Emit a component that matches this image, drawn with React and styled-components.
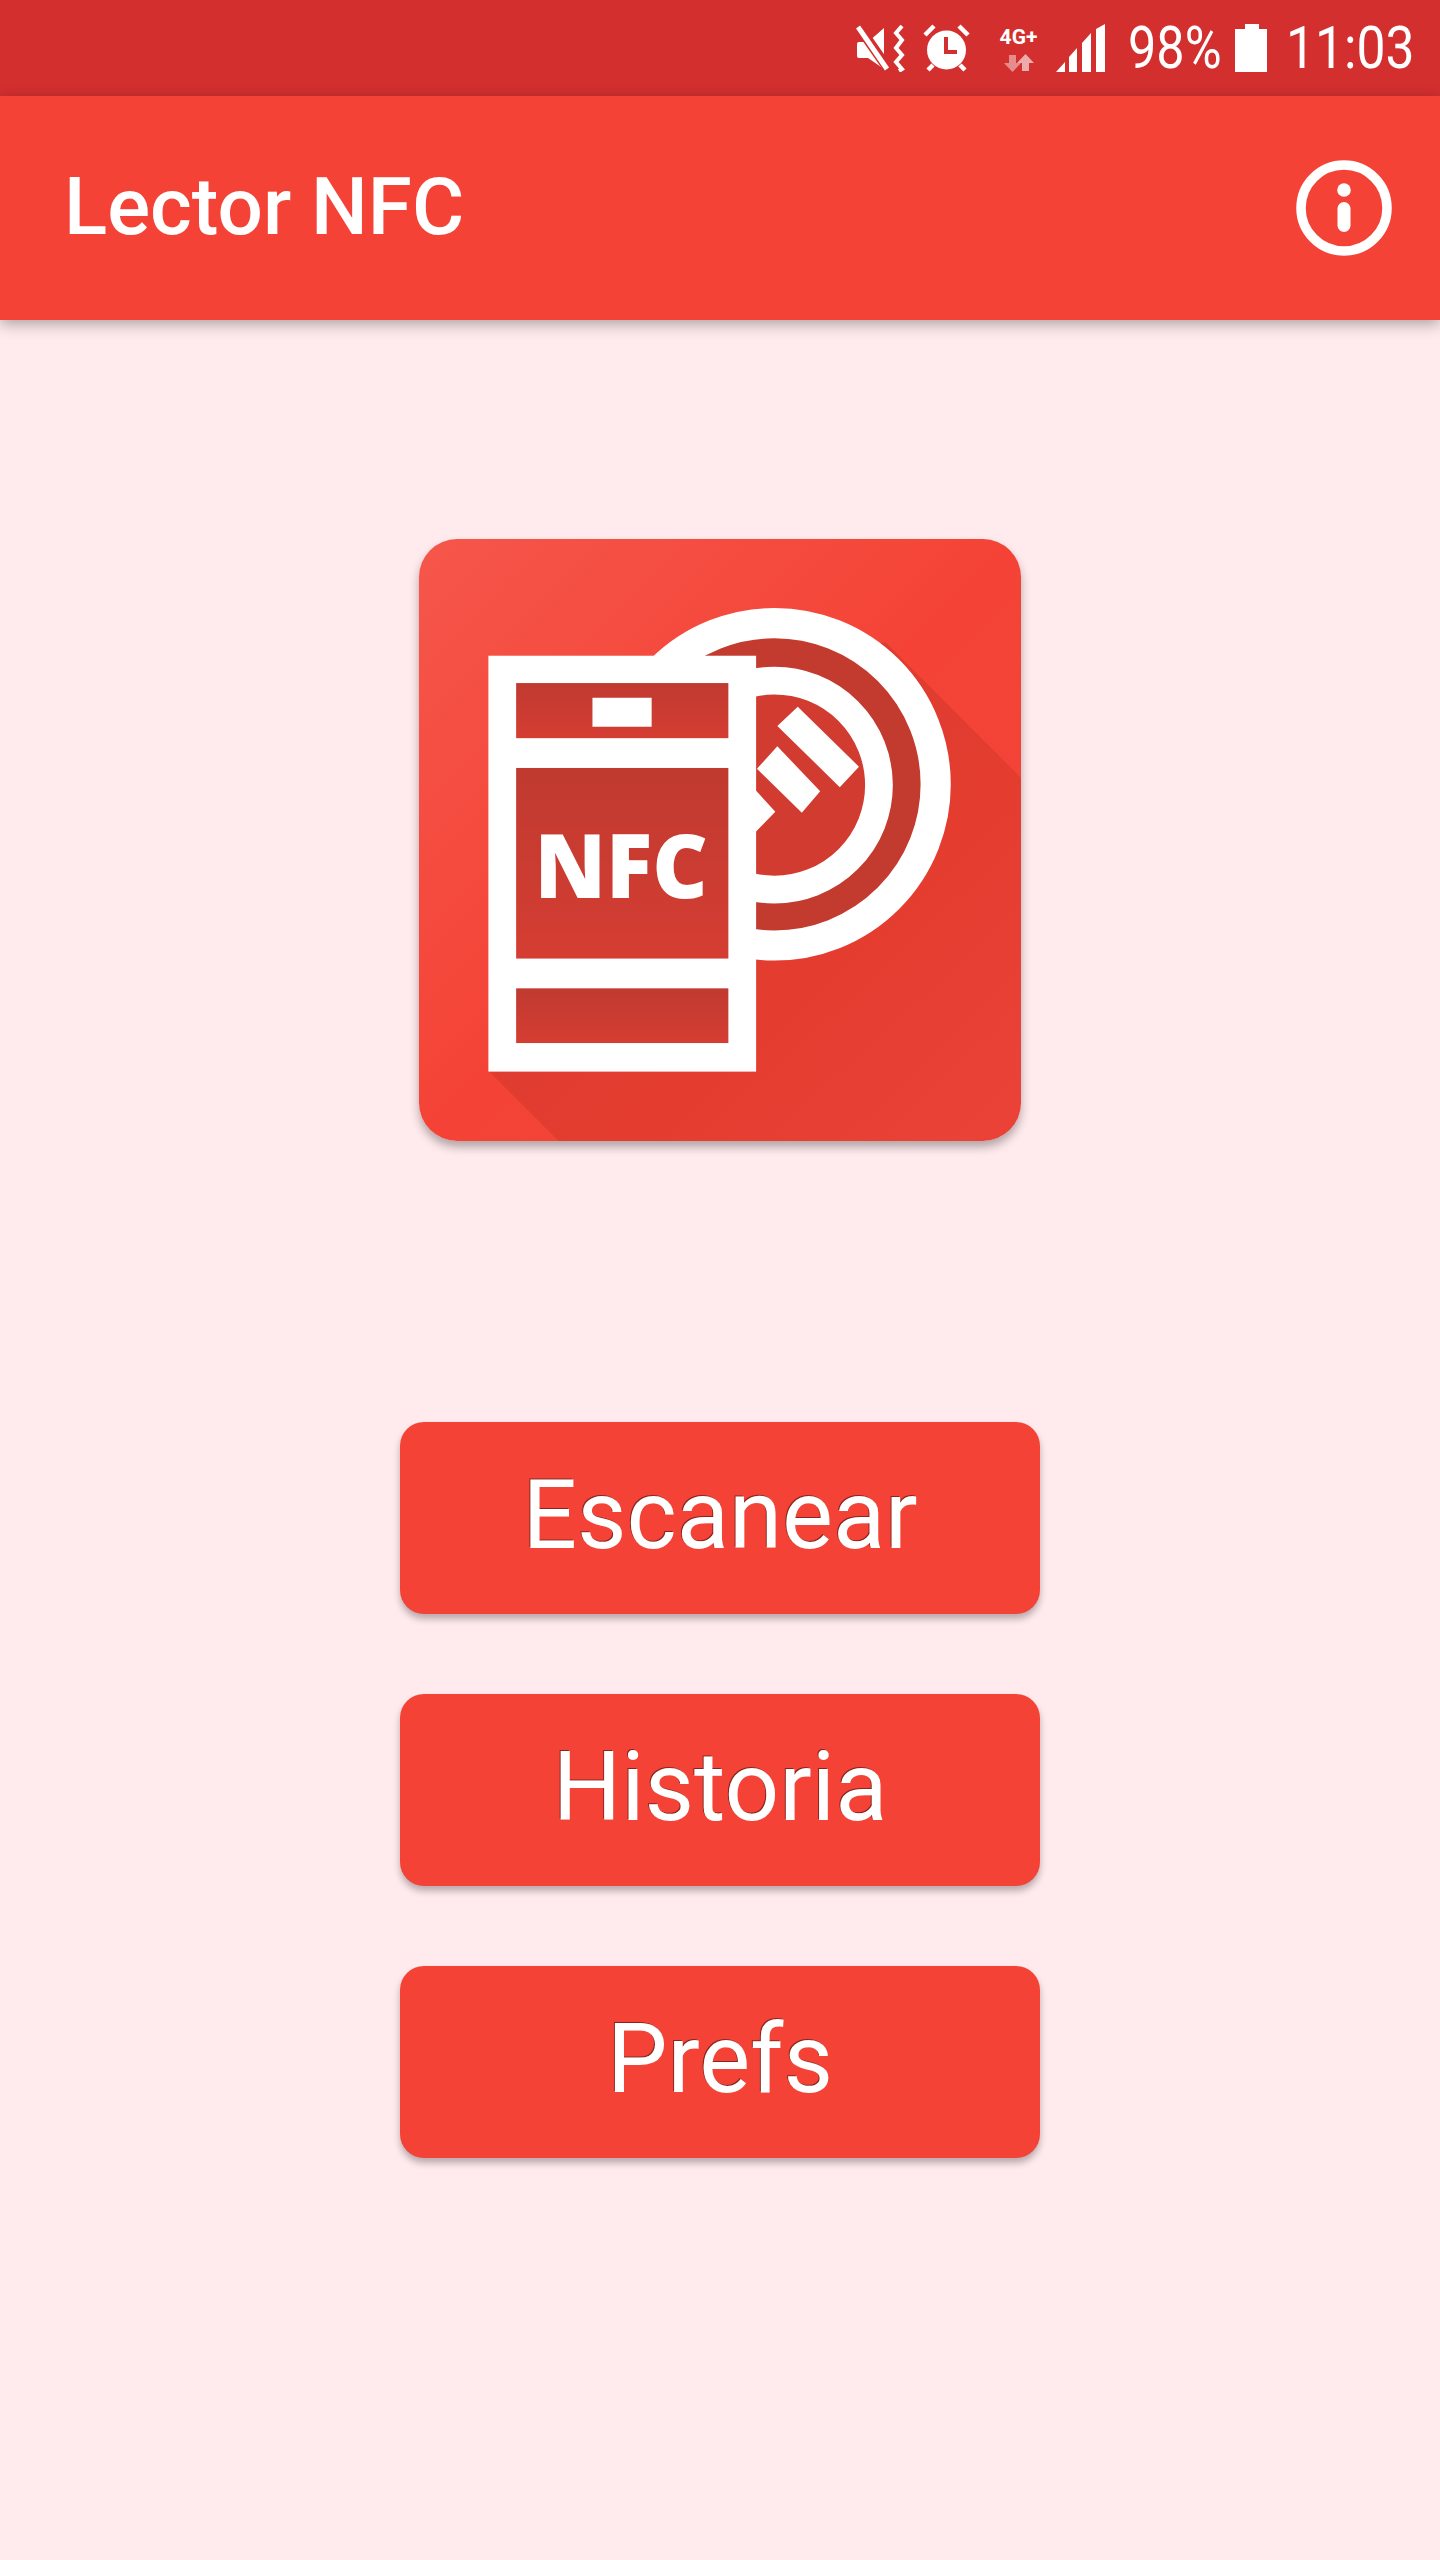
import React from 'react';
import styled, { createGlobalStyle } from 'styled-components';

const Global = createGlobalStyle`
  html, body { margin: 0; padding: 0; background: #FFEBEE; }
  #root { width: 1440px; }
`;

const Page = styled.div`
  width: 1440px;
  height: 2560px;
  background: #FFEBEE;
  display: flex;
  flex-direction: column;
  overflow: hidden;
  font-family: Roboto, "Liberation Sans", sans-serif;
`;

const StatusBar = styled.div`
  height: 96px;
  flex: none;
  background: #D32F2F;
  display: flex;
  align-items: center;
  justify-content: flex-end;
  padding-right: 27px;
  color: #fff;
`;

const StatusItem = styled.div`
  margin-left: ${p => p.$gap}px;
  display: flex;
  flex: none;
`;

const CondensedText = styled.span`
  display: block;
  width: ${p => p.$width}px;
  font-size: 60px;
  line-height: 60px;
  white-space: nowrap;
  transform: scaleX(${p => p.$scale});
  transform-origin: left center;
`;

const NetBlock = styled.div`
  width: 49px;
  height: 48px;
  display: flex;
  flex-direction: column;
  align-items: center;
  justify-content: space-between;
`;

const NetLabel = styled.span`
  font-size: 21px;
  line-height: 20px;
  font-weight: 700;
  white-space: nowrap;
  margin-top: 3px;
`;

const AppBar = styled.header`
  height: 224px;
  flex: none;
  background: #F44336;
  display: flex;
  align-items: center;
  justify-content: space-between;
  padding: 0 48px 0 64px;
  box-shadow: 0 4px 14px rgba(0, 0, 0, 0.32);
  position: relative;
  z-index: 1;
`;

const Title = styled.h1`
  margin: 0;
  color: #fff;
  font-size: 80px;
  line-height: 94px;
  font-weight: 500;
  transform: translateY(-1px);
`;

const Main = styled.main`
  display: flex;
  flex-direction: column;
  align-items: center;
  padding-top: 219px;
`;

const LogoFrame = styled.div`
  width: 602px;
  height: 602px;
  border-radius: 38px;
  overflow: hidden;
  box-shadow: 0 6px 10px rgba(0, 0, 0, 0.3);
  svg { display: block; filter: blur(0.6px); }
`;

const ButtonStack = styled.nav`
  margin-top: 281px;
  display: flex;
  flex-direction: column;
  gap: 80px;
`;

const MenuButton = styled.button`
  width: 640px;
  height: 192px;
  border: 0;
  border-radius: 24px;
  background: #F44336;
  color: #fff;
  font-family: Roboto, "Liberation Sans", sans-serif;
  font-size: 96px;
  font-weight: 400;
  line-height: 112px;
  padding: 0 0 6px;
  box-shadow: 0 5px 7px rgba(0, 0, 0, 0.28);
  text-shadow: -1px -1px 0 rgba(0, 0, 0, 0.45);
`;

const MuteIcon = () => (
  <svg width="52" height="47" viewBox="0 0 52 47">
    <path d="M3 17h9L28 3v41L12 33H3a2 2 0 0 1-2-2V19a2 2 0 0 1 2-2z" fill="#fff" />
    <path d="M3 2l30 43" stroke="#D32F2F" strokeWidth="10" />
    <path d="M2 2l29 42" stroke="#fff" strokeWidth="5" />
    <path d="M46 1l-6 7 6 7-6 8 6 7-6 7 6 7-3 2" stroke="#fff" strokeWidth="4" fill="none" />
  </svg>
);

const AlarmIcon = () => (
  <svg width="47" height="48" viewBox="0 0 47 48">
    <circle cx="23.5" cy="26" r="19.5" fill="#fff" />
    <path d="M2 11l9-9M45 11l-9-9M5 46l5-5M42 46l-5-5" stroke="#fff" strokeWidth="4.5" />
    <path d="M23 13v15h11" stroke="#D32F2F" strokeWidth="4" fill="none" />
  </svg>
);

const NetArrows = () => (
  <svg width="30" height="18" viewBox="0 0 30 18">
    <path d="M5 1h7v8h5l-8.500 9L0 9h5z" fill="#fff" fillOpacity="0.45" />
    <path d="M18 17h7V9h5l-8.500-9L13 9h5z" fill="#fff" fillOpacity="0.6" transform="translate(0 0)" />
  </svg>
);

const SignalIcon = () => (
  <svg width="49" height="48" viewBox="0 0 49 48">
    <path d="M0 48L9 38v10zM13 48V33l8-9v24zM26 48V19l9-10v39zM40 48V5l9-5v48z" fill="#fff" />
  </svg>
);

const BatteryIcon = () => (
  <svg width="32" height="48" viewBox="0 0 32 48">
    <path d="M10 0h14v5h8v43H0V5h10z" fill="#fff" />
  </svg>
);

const InfoIcon = () => (
  <svg width="96" height="96" viewBox="0 0 96 96">
    <circle cx="48" cy="48" r="43" fill="none" stroke="#fff" strokeWidth="9.500" />
    <circle cx="48" cy="30" r="6.800" fill="#fff" />
    <rect x="41.500" y="42" width="13" height="30" rx="6.500" fill="#fff" />
  </svg>
);

const NfcLogo = () => (
  <svg width="602" height="602" viewBox="47 47 1475 1475">
    <defs>
      <linearGradient id="base" x1="0" y1="0" x2="1" y2="1">
        <stop offset="0" stopColor="#F6564B" />
        <stop offset="0.5" stopColor="#F44336" />
        <stop offset="1" stopColor="#F2443A" />
      </linearGradient>
      <linearGradient id="cast" x1="0.15" y1="0.15" x2="0.95" y2="0.95">
        <stop offset="0" stopColor="#D93A2E" />
        <stop offset="0.6" stopColor="#E43D30" />
        <stop offset="1" stopColor="#EA4236" />
      </linearGradient>
      <linearGradient id="panel" x1="0" y1="0" x2="0" y2="1">
        <stop offset="0" stopColor="#C03A30" />
        <stop offset="1" stopColor="#D53D32" />
      </linearGradient>
    </defs>
    <rect x="47" y="47" width="1475" height="1475" fill="url(#base)" />
    <path d="M217 1350L392 1525H1525V635L1190 300 700 400z" fill="url(#cast)" />
    <circle cx="918" cy="648" r="395" fill="#C33A2F" stroke="#fff" strokeWidth="74" />
    <circle cx="918" cy="650" r="256" fill="#D13B30" stroke="#fff" strokeWidth="68" />
    <path d="M975 458l150 147-47 50-153-150zM925 555l105 110-45 53-110-108zM860 650l60 65-50 52-40-50z" fill="#fff" />
    <rect x="217" y="333" width="656" height="1019" fill="#fff" />
    <rect x="285" y="400" width="520" height="135" fill="url(#panel)" />
    <rect x="285" y="608" width="520" height="467" fill="url(#panel)" />
    <rect x="285" y="1148" width="520" height="134" fill="url(#panel)" />
    <rect x="472" y="436" width="145" height="71" fill="#fff" />
    <text
      x="330"
      y="926"
      textLength="425"
      lengthAdjust="spacingAndGlyphs"
      fontFamily="'Open Sans', sans-serif"
      fontWeight="800"
      fontSize="215"
      fill="#fff"
    >
      NFC
    </text>
  </svg>
);

export default function App() {
  return (
    <Page>
      <Global />
      <StatusBar>
        <StatusItem $gap={0}><MuteIcon /></StatusItem>
        <StatusItem $gap={15}><AlarmIcon /></StatusItem>
        <StatusItem $gap={24}>
          <NetBlock>
            <NetLabel>4G+</NetLabel>
            <NetArrows />
          </NetBlock>
        </StatusItem>
        <StatusItem $gap={13}><SignalIcon /></StatusItem>
        <StatusItem $gap={23}><CondensedText $width={93} $scale={0.84}>98%</CondensedText></StatusItem>
        <StatusItem $gap={14}><BatteryIcon /></StatusItem>
        <StatusItem $gap={19}><CondensedText $width={127} $scale={0.86}>11:03</CondensedText></StatusItem>
      </StatusBar>
      <AppBar>
        <Title>Lector NFC</Title>
        <InfoIcon />
      </AppBar>
      <Main>
        <LogoFrame><NfcLogo /></LogoFrame>
        <ButtonStack>
          <MenuButton>Escanear</MenuButton>
          <MenuButton>Historia</MenuButton>
          <MenuButton>Prefs</MenuButton>
        </ButtonStack>
      </Main>
    </Page>
  );
}
